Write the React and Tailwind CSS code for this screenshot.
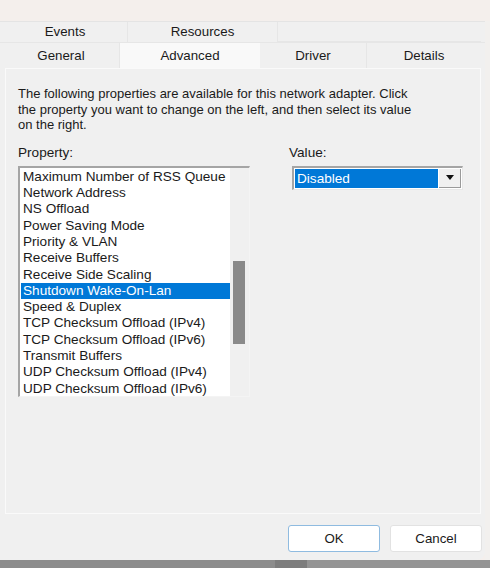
import React from 'react';

const properties = [
  'Maximum Number of RSS Queue',
  'Network Address',
  'NS Offload',
  'Power Saving Mode',
  'Priority & VLAN',
  'Receive Buffers',
  'Receive Side Scaling',
  'Shutdown Wake-On-Lan',
  'Speed & Duplex',
  'TCP Checksum Offload (IPv4)',
  'TCP Checksum Offload (IPv6)',
  'Transmit Buffers',
  'UDP Checksum Offload (IPv4)',
  'UDP Checksum Offload (IPv6)',
];

const Tab = ({ label, className = '' }) => (
  <div className={`flex items-center justify-center border-r border-[#e6e6e6] ${className}`}>
    {label}
  </div>
);

const App = () => {
  const selected = 'Shutdown Wake-On-Lan';

  return (
    <div
      className="w-[490px] h-[568px] bg-[#f4efec] flex flex-col overflow-hidden text-[13px] text-[#1a1a1a]"
      style={{ fontFamily: '"Liberation Sans", Arial, sans-serif' }}
    >
      <div className="h-[21px] shrink-0" />

      <div className="flex flex-1 min-h-0">
        <div className="w-[485px] flex flex-col bg-[#f0f0f0] border-t border-[#e4e4e4] rounded-br-[8px]">
          {/* tabs */}
          <div className="flex h-[20px] pl-[3px] pr-[4px] text-[13.3px]">
            <Tab label="Events" className="w-[125px]" />
            <Tab label="Resources" className="w-[150px]" />
            <div className="flex-1 border-b border-[#e6e6e6]" />
          </div>
          <div className="flex h-[26px] pl-[3px] pr-[4px] border-t border-[#e6e6e6] text-[13.3px]">
            <Tab label="General" className="w-[117px] pt-[1px]" />
            <div className="w-[140px] bg-[#f9f9f9] flex justify-center pt-[3px]">Advanced</div>
            <Tab label="Driver" className="w-[107px] pt-[1px]" />
            <Tab label="Details" className="flex-1 pt-[1px] border-r-0" />
          </div>

          {/* panel */}
          <div className="ml-[5px] mr-[4px] h-[446px] bg-[#f0f0f0] border border-[#fafafa] pl-[12px] pr-[12px] pt-[17px]">
            <p className="leading-[15.6px] text-[13px] whitespace-nowrap">
              The following properties are available for this network adapter. Click
              <br />
              the property you want to change on the left, and then select its value
              <br />
              on the right.
            </p>

            <div className="flex mt-[12px] text-[13.6px]">
              <div className="w-[232px]">
                <div className="leading-[16px]">Property:</div>
                <div className="mt-[5px] h-[231px] bg-white border-t-2 border-l-2 border-[#a5a5a5] border-r border-b border-r-[#f4f4f4] border-b-[#f4f4f4] flex">
                  <ul className="flex-1 pt-[1px] pl-[1px] min-w-0">
                    {properties.map((p) => (
                      <li
                        key={p}
                        className={`h-[16.3px] leading-[16.3px] pl-[2px] whitespace-nowrap overflow-hidden ${
                          p === selected ? 'bg-[#0078d7] text-white' : ''
                        }`}
                      >
                        {p}
                      </li>
                    ))}
                  </ul>
                  <div className="w-[19px] shrink-0 bg-[#f0f0f0] pl-[3px] pt-[93px]">
                    <div className="w-[12px] h-[83px] bg-[#8a8a8a]" />
                  </div>
                </div>
              </div>

              <div className="ml-[39px]">
                <div className="leading-[16px]">Value:</div>
                <div className="mt-[5px] ml-[3px] w-[171px] h-[24px] flex bg-white border-t-2 border-l-2 border-[#a5a5a5] border-r border-b border-r-[#e8e8e8] border-b-[#e8e8e8] p-[1px]">
                  <div className="flex-1 bg-[#0078d7] text-white leading-[19px] pl-[2px]">Disabled</div>
                  <div className="w-[22px] ml-[1px] flex items-center justify-center bg-[#f0f0f0] border-r border-b border-[#9a9a9a]">
                    <svg width="8" height="5" viewBox="0 0 8 5">
                      <path d="M0 0h8L4 5z" fill="#111" />
                    </svg>
                  </div>
                </div>
              </div>
            </div>
          </div>

          {/* buttons */}
          <div className="flex justify-end gap-[10px] pr-[3px] pt-[11px] text-[13.3px]">
            <button className="w-[92px] h-[27px] bg-white border border-[#8fbbe0] rounded-[3px] leading-[25px]">OK</button>
            <button className="w-[92px] h-[27px] bg-white border border-[#e2e2e2] rounded-[3px] leading-[25px]">
              Cancel
            </button>
          </div>
        </div>
        <div className="flex-1 bg-[#f2f0ee]" />
      </div>

      <div className="h-[8px] shrink-0 flex bg-[#8c8c8c]">
        <div className="w-[275px]" />
        <div className="w-[32px] bg-[#7d7d7d]" />
        <div className="flex-1 bg-[#949494]" />
      </div>
    </div>
  );
};

export default App;
